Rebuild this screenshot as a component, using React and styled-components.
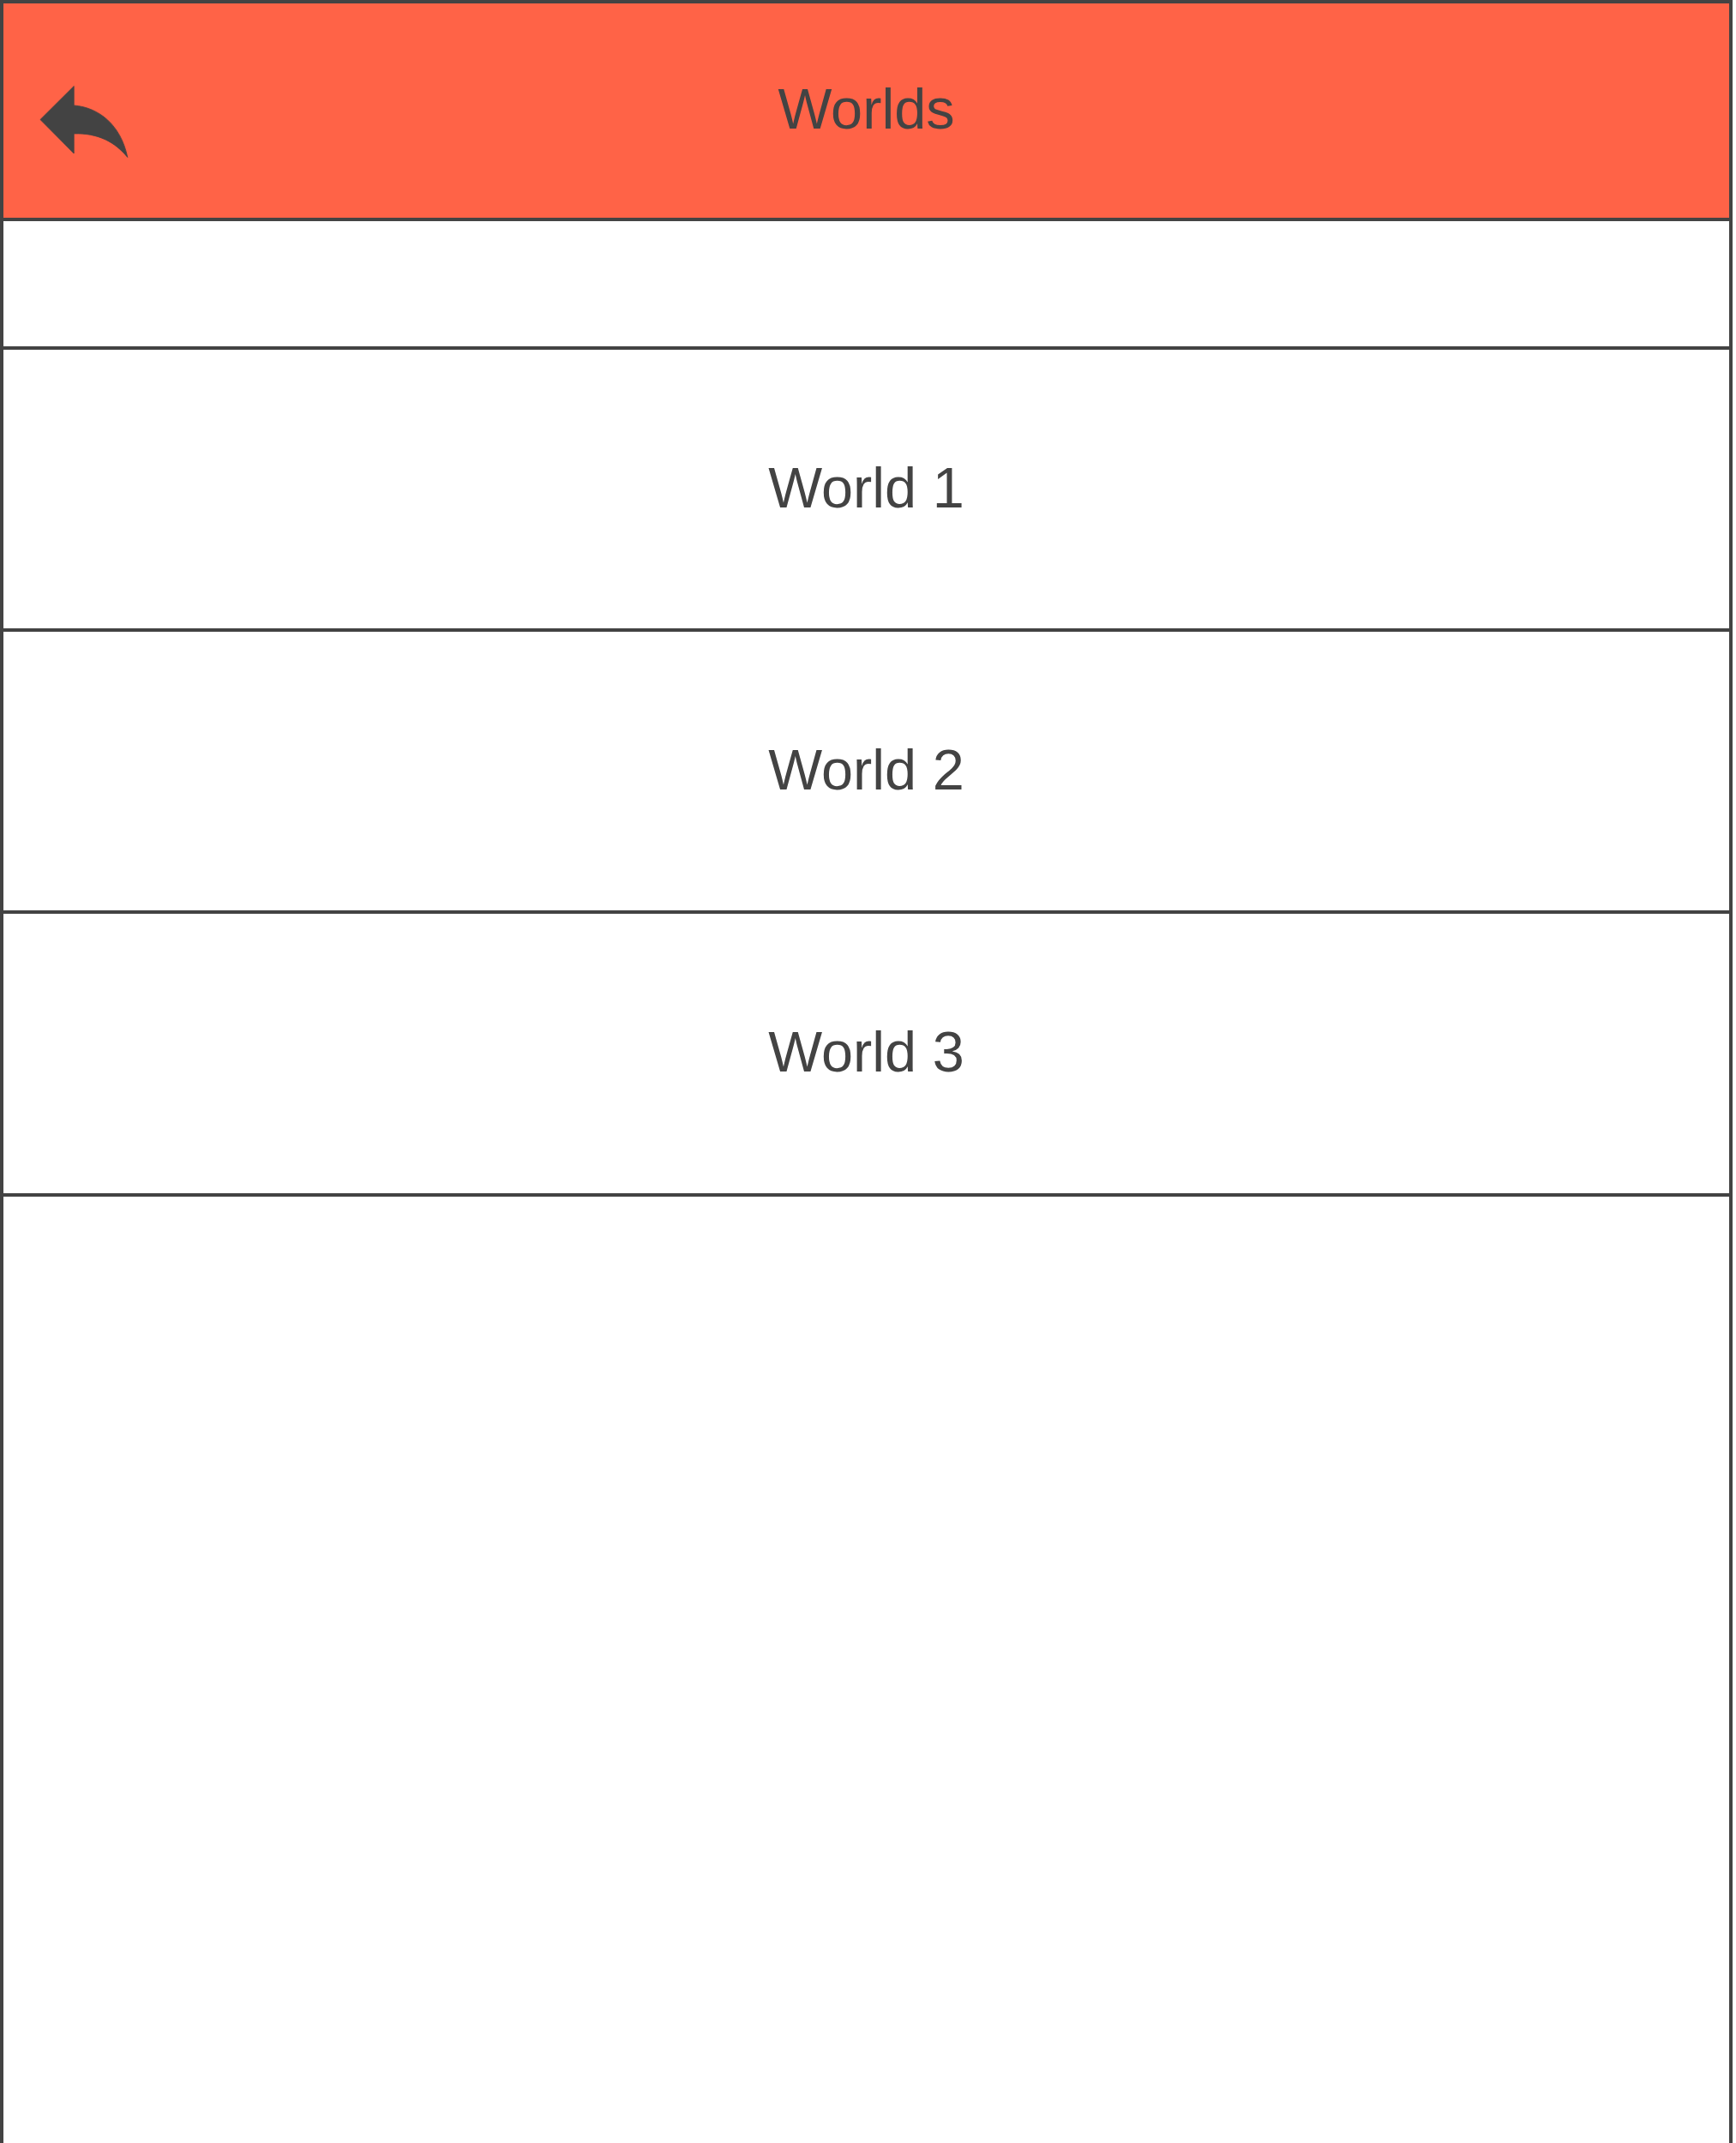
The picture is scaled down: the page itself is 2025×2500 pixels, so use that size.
import React from "react";
import styled, { createGlobalStyle } from "styled-components";

const ink = "#434343";

const GlobalStyle = createGlobalStyle`
  * { box-sizing: border-box; }
  body { margin: 0; background: #fff; overflow: hidden; }
`;

const Screen = styled.main`
  display: flex;
  flex-direction: column;
  width: 2021px;
  height: 2500px;
  border: 4px solid ${ink};
  border-bottom: 0;
  background: #fff;
  color: ${ink};
  font: 66.667px/76px "Liberation Sans", Arial, sans-serif;
`;

const Header = styled.header`
  display: grid;
  grid-template-columns: 150px 1fr 150px;
  height: 254.167px;
  background: #ff6347;
  border-bottom: 4px solid ${ink};
`;

const BackButton = styled.button`
  display: flex;
  align-items: flex-start;
  padding: 96px 0 0 43px;
  border: 0;
  background: none;
  color: inherit;
`;

const BackGlyph = styled.svg`
  flex: none;
  overflow: visible;
`;

const Title = styled.h1`
  margin: 0;
  padding-top: 85px;
  font: inherit;
  text-align: center;
`;

const Spacer = styled.div`
  height: 150px;
  border-bottom: 4px solid ${ink};
`;

const List = styled.ul`
  margin: 0;
  padding: 0;
  list-style: none;
`;

const WorldItem = styled.li`
  height: 329.167px;
  padding-top: 123px;
  border-bottom: 4px solid ${ink};
  text-align: center;
`;

function BackIcon() {
  return (
    <BackGlyph
      width="102"
      height="84"
      viewBox="0 0 102 84"
      fill="currentColor"
      stroke="currentColor"
      strokeWidth="0.8"
      aria-hidden="true"
    >
      <path d="M0 39.5 39.2 0.5V22.9C69 25.5 94 46 101.8 83.5C87 65.5 67 55 39.2 56V79Z" />
    </BackGlyph>
  );
}

export default function App() {
  return (
    <>
      <GlobalStyle />
      <Screen>
        <Header>
          <BackButton aria-label="Back"><BackIcon /></BackButton>
          <Title>Worlds</Title>
        </Header>
        <Spacer />
        <List>
          {["World 1", "World 2", "World 3"].map((name) => (
            <WorldItem key={name}>{name}</WorldItem>
          ))}
        </List>
      </Screen>
    </>
  );
}
